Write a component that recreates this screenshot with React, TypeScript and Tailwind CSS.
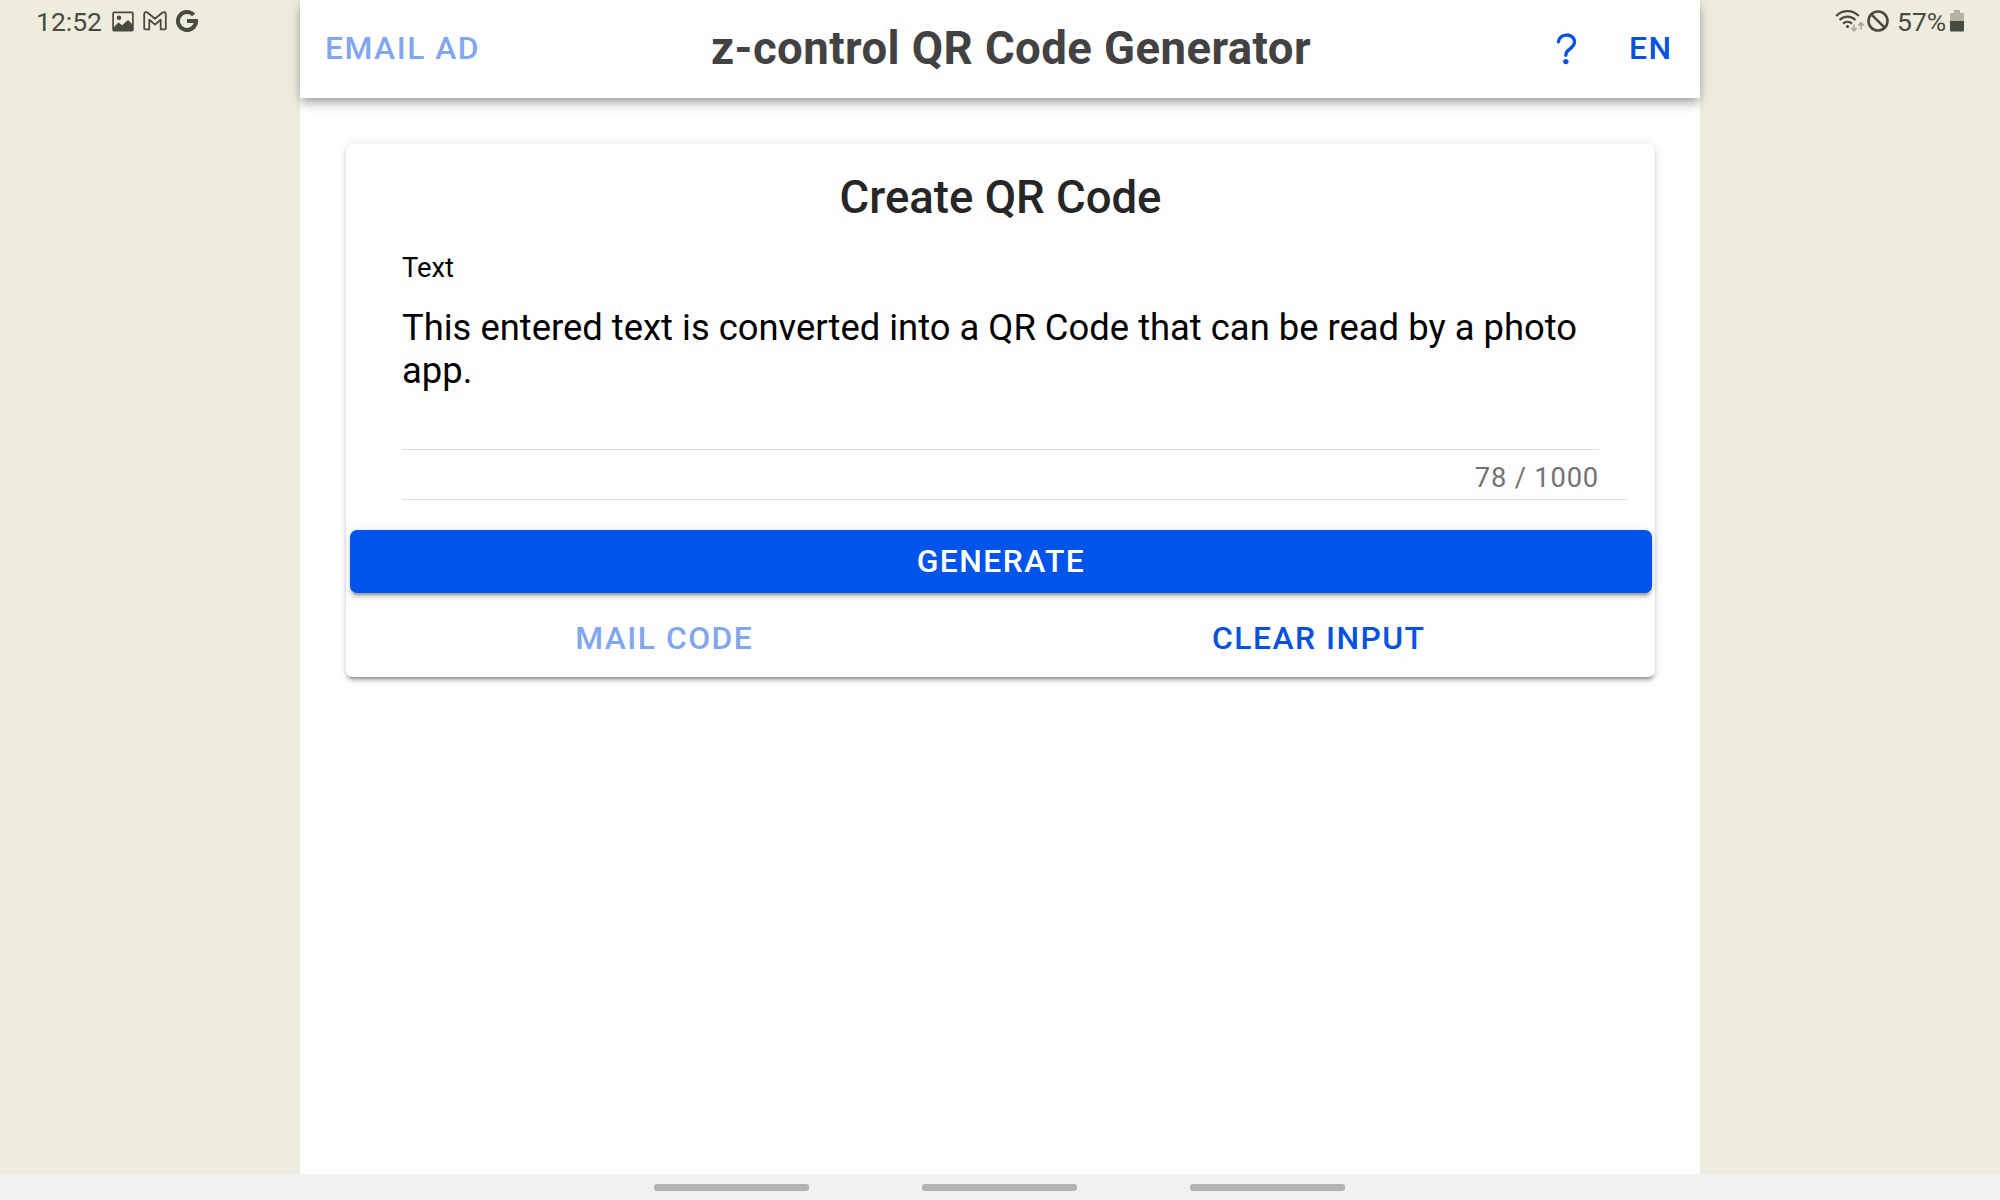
import React from "react";

function StatusLeft() {
  return (
    <div className="flex h-[42px] items-center pl-[36px] text-[#494a42]">
      <span className="w-[76px] whitespace-nowrap pt-px text-[26.5px] leading-[42px]">12:52</span>
      <svg className="h-[21px] w-[22px]" viewBox="0 0 22 21" fill="none">
        <rect x="1.100" y="1.4" width="19.8" height="18.2" rx="1" stroke="currentColor" strokeWidth="1.7" />
        <circle cx="7" cy="6.8" r="2.2" fill="currentColor" />
        <path d="M1 17l5.5-5.5 3.6 2.8 6-5.3 4.900 5v5.5H1z" fill="currentColor" />
      </svg>
      <svg className="ml-[9px] h-[20px] w-[24px]" viewBox="0 0 24 20" fill="none" stroke="currentColor" strokeWidth="1.8" strokeLinejoin="round">
        <path d="M1.2 3.200C1.2 1 3.200.5 4.800 1.800L12 7.800l7.200-6C20.800.5 22.800 1 22.800 3.200V17.200c0 .8-.4 1.100-1.100 1.100h-4V8.700L12 13.600 6.300 8.700v9.600H2.300c-.7 0-1.100-.3-1.100-1.100z" />
      </svg>
      <svg className="ml-[9px] h-[22px] w-[22px]" viewBox="0 0 22 22" fill="none" stroke="currentColor" strokeWidth="4">
        <path d="M17.6 4.900A9 9 0 1 0 20 11H11" />
      </svg>
    </div>
  );
}

function StatusRight() {
  return (
    <div className="flex h-[42px] items-center justify-end pr-[36px] text-[#494a42]">
      <svg className="h-[24px] w-[30px]" viewBox="0 0 30 24" fill="none" stroke="currentColor" strokeWidth="2.2">
        <path d="M1.2 7C7.500.6 17.500.6 23.800 7" />
        <path d="M4.600 11c4.500-4.500 11.300-4.500 15.800 0" />
        <path d="M8 14.600c2.500-2.500 6.500-2.500 9 0" />
        <circle cx="12.500" cy="17.500" r="1.600" fill="currentColor" stroke="none" />
        <g stroke="#adad9f" strokeWidth="1.8">
          <path d="M19 15.500V21.500M16.300 19l2.700 2.700 2.700-2.700" />
          <path d="M26 20.500V13.800M23.300 16.500l2.700-2.700 2.700 2.700" />
        </g>
      </svg>
      <svg className="ml-[2px] h-[22px] w-[22px]" viewBox="0 0 22 22" fill="none" stroke="currentColor" strokeWidth="2.6">
        <circle cx="11" cy="11" r="9.500" />
        <path d="M4.300 4.300l13.400 13.400" />
      </svg>
      <span className="ml-[8px] w-[53px] whitespace-nowrap pt-px text-[26.5px] leading-[42px]">57%</span>
      <svg className="h-[22px] w-[14px]" viewBox="0 0 14 22">
        <path d="M4 0h6v3h4v8H0V3h4z" fill="#b3b3a6" />
        <path d="M0 11h14v9.500a1 1 0 0 1-1 1H1a1 1 0 0 1-1-1z" fill="currentColor" />
      </svg>
    </div>
  );
}

function Header() {
  return (
    <header className="relative flex h-[98px] items-center bg-[#fefefe] pl-[25px] text-[31.85px] font-medium tracking-[1.47px] text-[#0552df] shadow-[0_3.5px_7px_-1.75px_rgba(0,0,0,0.2),0_7px_8.75px_0_rgba(0,0,0,0.14),0_1.75px_17.5px_0_rgba(0,0,0,0.12)]">
      <button className="w-[386px] whitespace-nowrap text-left opacity-50">EMAIL AD</button>
      <h1 className="w-[834px] whitespace-nowrap text-[45.5px] font-bold tracking-[0.4375px] text-[#424242]">z-control QR Code Generator</h1>
      <svg className="h-[43px] w-[43px]" viewBox="0 0 512 512" fill="none">
        <path
          d="M160 164s1.440-33 33.540-59.460C212.600 88.830 235.490 84.280 256 84c18.730-.230 35.470 2.940 45.480 7.820C318.590 100.200 352 120.600 352 164c0 45.670-29.180 66.370-62.350 89.180S248 298.360 248 324"
          stroke="currentColor"
          strokeWidth="40"
          strokeLinecap="round"
          strokeMiterlimit="10"
        />
        <circle cx="248" cy="399.990" r="32" fill="currentColor" />
      </svg>
      <button className="ml-[41px] whitespace-nowrap">EN</button>
    </header>
  );
}

function GeneratorCard() {
  return (
    <section className="mx-[46px] mt-[46px] h-[533px] w-[1309px] rounded-[7px] bg-[#fefefe] shadow-[0_5.25px_1.75px_-3.5px_rgba(0,0,0,0.2),0_3.5px_3.5px_0_rgba(0,0,0,0.14),0_1.75px_8.75px_0_rgba(0,0,0,0.12)]">
      <h2 className="h-[107px] text-center text-[45.5px] font-medium leading-[108px] text-[#262626]">Create QR Code</h2>
      <div className="ml-[56px] mr-[28px] h-[249px] border-b border-[#dedede] pr-[28px] text-black">
        <div className="text-[27.3px] leading-[35px]">Text</div>
        <p className="mt-[20px] h-[144px] border-b border-[#dedede] text-[36.4px] leading-[43px]">
          This entered text is converted into a QR Code that can be read by a photo app.
        </p>
        <div className="mt-[8px] text-right text-[27.3px] leading-[40px] tracking-[0.82px] text-[#737373]">78 / 1000</div>
      </div>
      <button className="ml-[4px] mt-[30px] block h-[63px] w-[1302px] rounded-[7px] bg-[#0054e9] text-center text-[31.85px] font-medium tracking-[1.47px] text-white shadow-[0_5.25px_1.75px_-3.5px_rgba(0,0,0,0.2),0_3.5px_3.5px_0_rgba(0,0,0,0.14),0_1.75px_8.75px_0_rgba(0,0,0,0.12)]">
        GENERATE
      </button>
      <div className="-ml-[9px] mt-[14px] grid h-[63px] w-[1309px] grid-cols-2 text-[31.85px] font-medium tracking-[1.47px] text-[#0552df]">
        <button className="opacity-50">MAIL CODE</button>
        <button>CLEAR INPUT</button>
      </div>
    </section>
  );
}

export default function App() {
  return (
    <div className="flex h-[1200px] w-[2000px] flex-col overflow-hidden bg-[#eeecdd] font-[Roboto,sans-serif]">
      <div className="flex h-[1174px]">
        <div className="w-[300px]">
          <StatusLeft />
        </div>
        <main className="h-[1174px] w-[1400px] bg-[#fefefe]">
          <Header />
          <GeneratorCard />
        </main>
        <div className="w-[300px]">
          <StatusRight />
        </div>
      </div>
      <nav className="flex h-[26px] items-center justify-center gap-[113px] bg-[#f1f1f1] pr-[2px]">
        <span className="h-[7px] w-[155px] rounded-[3px] bg-[#b3b3b3]" />
        <span className="h-[7px] w-[155px] rounded-[3px] bg-[#b3b3b3]" />
        <span className="h-[7px] w-[155px] rounded-[3px] bg-[#b3b3b3]" />
      </nav>
    </div>
  );
}
